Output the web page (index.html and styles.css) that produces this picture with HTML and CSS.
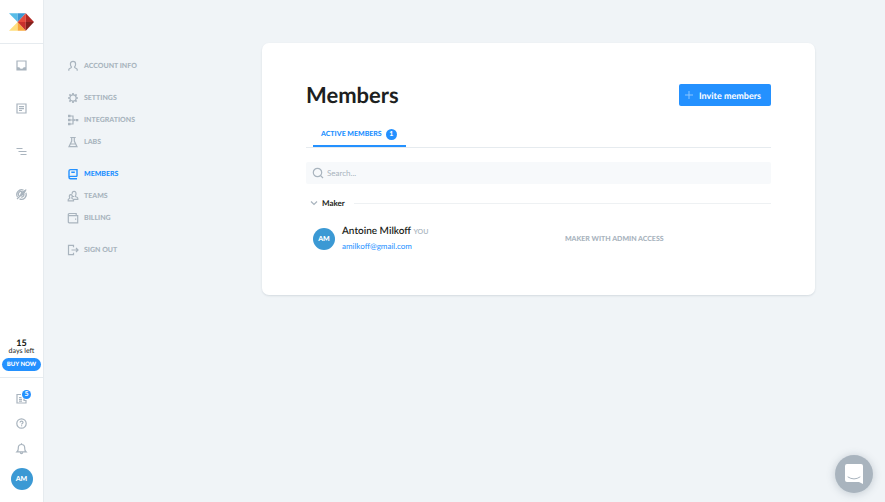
FILE: index.html
```html
<!DOCTYPE html>
<html lang="en">
<head>
  <meta charset="UTF-8">
  <meta name="viewport" content="width=device-width, initial-scale=1.0">
  <title>Members</title>
  <link rel="stylesheet" href="styles.css">
</head>
<body>
  <aside class="rail">
    <a class="logo" href="#" aria-label="Home">
      <svg width="25" height="18" viewBox="0 0 26 18">
        <path fill="#58bde8" d="M0 0h9v9z"/>
        <path fill="#3b97d3" d="M9 0h8.500L9 9z"/>
        <path fill="#ffdf7e" d="M9 9v9H0z"/>
        <path fill="#f8a83c" d="M9 9l8.500 9H9z"/>
        <path fill="#e64a3c" d="M17.500 0v9H9z"/>
        <path fill="#c9302c" d="M9 9h8.500v9z"/>
        <path fill="#b02a26" d="M17.500 0L26 9h-8.500z"/>
        <path fill="#84201c" d="M17.500 9H26l-8.500 9z"/>
      </svg>
    </a>
    <nav class="rail-nav">
      <a href="#" aria-label="Inbox">
        <svg class="icon" width="11" height="11" viewBox="0 0 11 11"><path d="M1 1h9v9H1zM1 7.800h2c.3 2 4.700 2 5 0h2M1.500 9.200h2.500M7 9.200h2.500"/></svg>
      </a>
      <a href="#" aria-label="Notes">
        <svg class="icon" width="11" height="11" viewBox="0 0 11 11"><path d="M1 1h9v9H1zM3 3.700h5M3 5.600h5M3 7.500h3"/></svg>
      </a>
      <a href="#" aria-label="Roadmap">
        <svg class="icon" width="11" height="11" viewBox="0 0 11 11"><path d="M.5 2.500h6M2.500 5.500h8M4.500 8.500h6"/></svg>
      </a>
      <a href="#" aria-label="Portal">
        <svg class="icon" width="11" height="11" viewBox="0 0 11 11"><path d="M7.500 1.100A4.800 4.800 0 0 0 1.500 8M3.500 9.900A4.800 4.800 0 0 0 9.900 3.700M6.500 3A2.600 2.600 0 0 0 3 6.800M5 8A2.600 2.600 0 0 0 8 5M1 10l9-9"/><path fill="#a9b4be" d="M4.600 6.400l1-2.800L9.200 1.400 7.400 5.400z"/></svg>
      </a>
    </nav>
    <div class="trial">
      <strong>15</strong>
      <span>days left</span>
      <button class="buy" type="button">BUY NOW</button>
    </div>
    <div class="rail-bottom">
      <a class="news" href="#" aria-label="News, 5 unread">
        <svg class="icon" width="11" height="11" viewBox="0 0 11 11"><path d="M5 1.500H1V10h9V7.500H8V5.500M3 4.500h2.500M3 6.300h3M3 8.100h3"/></svg>
        <span class="news-count">5</span>
      </a>
      <a href="#" aria-label="Help">
        <svg class="icon" width="11" height="11" viewBox="0 0 11 11"><circle cx="5.500" cy="5.500" r="4.700"/><path d="M4.100 4.500c0-1.900 2.900-1.900 2.900 0 0 1-1.400 1-1.400 1.900M5.600 7.300v1"/></svg>
      </a>
      <a href="#" aria-label="Notifications">
        <svg class="icon" width="11" height="11" viewBox="0 0 11 11"><path d="M1 8.800h9C8.500 7.500 8.700 6.500 8.700 4.700c0-4.300-6.400-4.300-6.400 0C2.300 6.500 2.500 7.500 1 8.800zM5.500 1V.2M4.300 9.700c.2 1.200 2.200 1.200 2.400 0"/></svg>
      </a>
      <button class="avatar" type="button">AM</button>
    </div>
  </aside>

  <nav class="menu">
    <ul>
      <li><a href="#"><svg class="icon" width="12" height="12" viewBox="0 0 12 12"><path d="M1.800 10.800V9.500c0-1.500 2.700-1.100 2.700-2.500C3.700 6.500 3.400 5.500 3.400 4c0-3.500 5.200-3.500 5.200 0 0 1.500-.3 2.500-1.100 3 0 1.400 2.700 1 2.700 2.500v1.300"/></svg>ACCOUNT INFO</a></li>
    </ul>
    <ul>
      <li><a href="#"><svg class="icon" width="12" height="12" viewBox="0 0 12 12"><circle cx="6" cy="6" r="3.100"/><path stroke-width="1.700" d="M6 1v2M6 9v2M1 6h2M9 6h2M2.400 2.400l1.400 1.400M8.200 8.200l1.400 1.400M9.600 2.400L8.200 3.800M3.800 8.200L2.400 9.600"/></svg>SETTINGS</a></li>
      <li><a href="#"><svg class="icon" width="12" height="12" viewBox="0 0 12 12"><path d="M2.500 2H6v8H2.500M2.500 6h8"/><path fill="#a9b4be" stroke="none" d="M1 .8h2.500v2.500H1zM1 4.800h2.500v2.500H1zM1 8.800h2.500v2.500H1zM9 4.900h2.300v2.300H9zM6.500 4.400L8.200 6 6.500 7.700z"/></svg>INTEGRATIONS</a></li>
      <li><a href="#"><svg class="icon" width="12" height="12" viewBox="0 0 12 12"><path d="M3.300 1.500h5.400M4.700 1.500v3.500L2 10.700h8L7.300 5V1.500M3.700 8h4.600"/></svg>LABS</a></li>
    </ul>
    <ul>
      <li><a class="active" href="#" aria-current="page"><svg class="icon" width="12" height="12" viewBox="0 0 12 12"><path stroke-width="1.400" d="M10 8.400V1.600H3.500C2.300 1.600 2 2.200 2 3v6.200c0 1 .5 1.600 1.500 1.600H10M2 9.500c0-.8.600-1.100 1.500-1.100H10M4.300 4.300h3.500"/></svg>MEMBERS</a></li>
      <li><a href="#"><svg class="icon" width="12" height="12" viewBox="0 0 12 12"><path d="M1.200 10.800V9.700c0-1 1.600-.8 1.600-1.700C1.800 5.700 2.500 4.600 3.800 4.600S5.900 5.700 4.800 8c0 .9 1.700.7 1.700 1.700v1.100zM5.200 3.900C4.900.5 9.200.5 9 3.700 9 5 8.600 5.500 8.400 6.200c0 .8 2.400.9 2.400 2v1.200H7M5.300 6.500h2"/></svg>TEAMS</a></li>
      <li><a href="#"><svg class="icon" width="12" height="12" viewBox="0 0 12 12"><path d="M9.200 3.600V1.500H2.300c-.8 0-1 .4-1 1s.3 1.100 1 1.100h8.400v7.200H2.300c-.8 0-1-.4-1-1V2.500M8 7.200h1.200"/></svg>BILLING</a></li>
    </ul>
    <ul>
      <li><a href="#"><svg class="icon" width="12" height="12" viewBox="0 0 12 12"><path d="M6.500 3.300V1.400h-5v9.200h5V8.700M4.500 6h6.500M9 4l2 2-2 2"/></svg>SIGN OUT</a></li>
    </ul>
  </nav>

  <main class="card">
    <header class="card-header">
      <h1>Members</h1>
      <button class="invite" type="button">
        <svg width="8" height="8" viewBox="0 0 8 8"><path d="M4 0v8M0 4h8"/></svg>
        Invite members
      </button>
    </header>

    <div class="tabs">
      <button class="tab" type="button">ACTIVE MEMBERS <span class="count">1</span></button>
    </div>

    <label class="search">
      <svg class="icon" width="12" height="12" viewBox="0 0 12 12"><circle cx="5.500" cy="5.500" r="4.200"/><path d="M8.600 8.600L11 11"/></svg>
      <input type="text" placeholder="Search..." aria-label="Search members">
    </label>

    <section class="group">
      <h2>
        <svg class="icon" width="8" height="6" viewBox="0 0 8 6"><path d="M1 1.500l3 3 3-3"/></svg>
        Maker
      </h2>
      <div class="member">
        <span class="avatar">AM</span>
        <div class="who">
          <div class="name">Antoine Milkoff <small>YOU</small></div>
          <a href="mailto:amilkoff@gmail.com">amilkoff@gmail.com</a>
        </div>
        <div class="role">MAKER WITH ADMIN ACCESS</div>
      </div>
    </section>
  </main>

  <button class="chat" type="button" aria-label="Open chat">
    <svg width="18" height="20" viewBox="0 0 18 20">
      <path fill="#fff" d="M2 0h14q2 0 2 2v18l-4-2H2q-2 0-2-2V2q0-2 2-2z"/>
      <path fill="none" stroke="#a9b4be" stroke-linecap="round" d="M3 13q6 4 12 0"/>
    </svg>
  </button>
</body>
</html>
```

FILE: styles.css
```css
* {
  box-sizing: border-box;
}

body {
  display: flex;
  align-items: flex-start;
  min-height: 100vh;
  margin: 0;
  background: #f0f4f7;
  color: #1d1f21;
  font-family: Lato, sans-serif;
  font-size: 8px;
  text-rendering: geometricPrecision;
}

a {
  color: inherit;
  text-decoration: none;
}

button {
  padding: 0;
  border: none;
  font: inherit;
  text-rendering: inherit;
  cursor: pointer;
}

svg {
  display: block;
  flex: none;
}

.icon {
  fill: none;
  stroke: currentColor;
  stroke-width: 1.2;
  overflow: visible;
}

/* left rail */
.rail {
  position: sticky;
  top: 0;
  display: flex;
  flex-direction: column;
  flex: none;
  width: 44px;
  height: 100vh;
  background: #fff;
  border-right: 1px solid #e6ebef;
  color: #a9b4be;
}

.logo {
  display: flex;
  align-items: center;
  justify-content: center;
  height: 44px;
  border-bottom: 1px solid #e6ebef;
}

.rail-nav a {
  display: flex;
  align-items: center;
  justify-content: center;
  height: 43px;
}

.trial {
  display: flex;
  flex-direction: column;
  align-items: center;
  margin-top: auto;
  padding-bottom: 6px;
  border-bottom: 1px solid #e6ebef;
  color: #1d1f21;
  font-size: 7px;
  line-height: 9px;
  white-space: nowrap;
}

.trial strong {
  font-size: 9px;
  font-weight: 900;
}

.buy {
  width: 39px;
  height: 13px;
  margin-top: 2px;
  background: #2491ff;
  border-radius: 7px;
  color: #fff;
  font-size: 6px;
  font-weight: 900;
}

.rail-bottom {
  display: flex;
  flex-direction: column;
  align-items: center;
  gap: 14px;
  padding: 15px 0 12px;
}

.news {
  position: relative;
}

.news-count {
  position: absolute;
  top: -3px;
  right: -4px;
  width: 9px;
  height: 9px;
  background: #2491ff;
  border-radius: 50%;
  color: #fff;
  font-size: 7px;
  line-height: 9px;
  font-weight: 700;
  text-align: center;
}

.avatar {
  display: flex;
  align-items: center;
  justify-content: center;
  flex: none;
  width: 22px;
  height: 22px;
  background: #3b99d4;
  border-radius: 50%;
  color: #fff;
  font-size: 7px;
  font-weight: 900;
}

/* settings menu */
.menu {
  flex: none;
  width: 218px;
  padding: 55px 0 0 23px;
  color: #a9b4be;
  font-size: 7px;
  font-weight: 900;
}

.menu ul {
  margin: 0 0 10px;
  padding: 0;
  list-style: none;
}

.menu a {
  display: flex;
  align-items: center;
  gap: 5px;
  height: 22px;
}

.menu .active {
  color: #2491ff;
}

/* members card */
.card {
  flex: 1;
  margin: 43px 70px 43px 0;
  padding: 41px 44px 42px;
  background: #fff;
  border-radius: 7px;
  box-shadow: 0 1px 2px rgba(60, 80, 100, 0.15);
}

.card-header {
  display: flex;
  align-items: center;
  justify-content: space-between;
  height: 22px;
}

h1 {
  margin: 0;
  font-size: 22px;
  line-height: 22px;
  font-weight: 700;
}

.invite {
  display: flex;
  align-items: center;
  gap: 6px;
  height: 22px;
  padding: 0 10px 0 6px;
  background: #2491ff;
  border-radius: 2px;
  color: #fff;
  font-size: 9px;
  font-weight: 700;
}

.invite svg {
  stroke: #8cc6ff;
}

.tabs {
  display: flex;
  margin-top: 16px;
  padding-left: 7px;
  border-bottom: 1px solid #e6ebef;
}

.tab {
  display: flex;
  align-items: center;
  gap: 4px;
  height: 25px;
  padding: 1px 9px 0 8px;
  background: none;
  border-bottom: 2px solid #2491ff;
  color: #2491ff;
  font-size: 7px;
  font-weight: 900;
}

.count {
  width: 11px;
  height: 11px;
  background: #2491ff;
  border-radius: 50%;
  color: #fff;
  line-height: 11px;
}

.search {
  display: flex;
  align-items: center;
  gap: 3px;
  height: 22px;
  margin-top: 14px;
  padding: 0 6px;
  background: #f7f9fb;
  border-radius: 2px;
  color: #a9b4be;
}

.search input {
  flex: 1;
  min-width: 0;
  padding: 0;
  border: none;
  outline: none;
  background: none;
  color: #1d1f21;
  font: inherit;
  text-rendering: inherit;
}

.search input::placeholder {
  color: #a9b4be;
}

h2 {
  display: flex;
  align-items: center;
  gap: 4px;
  margin: 12px 0 0 4px;
  font-size: 8px;
  line-height: 14px;
  font-weight: 700;
}

h2 .icon {
  color: #a9b4be;
}

h2::after {
  content: "";
  flex: 1;
  height: 1px;
  margin-left: 5px;
  background: #eef1f3;
}

.member {
  display: flex;
  align-items: center;
  gap: 7px;
  margin-top: 14px;
  padding-left: 7px;
}

.who {
  flex: 1;
  line-height: 14px;
}

.name {
  font-size: 10px;
  font-weight: 600;
}

.name small {
  color: #a9b4be;
  font-size: 7px;
  font-weight: 600;
}

.who a {
  color: #2491ff;
}

.role {
  flex: none;
  width: 45%;
  color: #a9b4be;
  font-size: 7px;
  font-weight: 900;
}

/* chat launcher */
.chat {
  position: fixed;
  right: 12px;
  bottom: 9px;
  display: flex;
  align-items: center;
  justify-content: center;
  width: 38px;
  height: 38px;
  background: #a9b4be;
  border-radius: 50%;
  box-shadow: 0 1px 8px rgba(60, 80, 100, 0.25);
}
```
